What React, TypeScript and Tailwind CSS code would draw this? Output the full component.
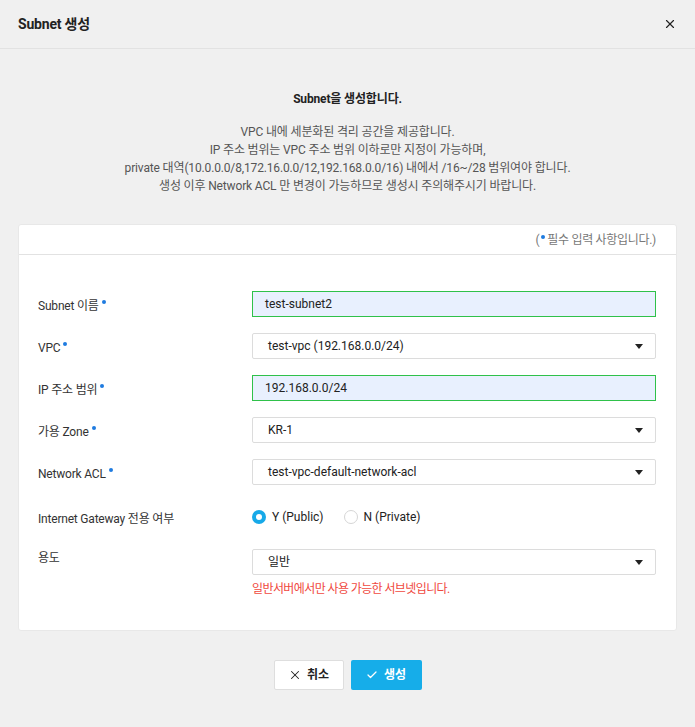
import { X, Check } from 'lucide-react'

const fontStack = { fontFamily: 'Roboto, "Noto Sans CJK KR", sans-serif' }

function Required() {
  return <span className="ml-[3px] inline-block h-[4px] w-[4px] -translate-y-[6px] rounded-full bg-[#1e7be0]" />
}

function Label({ text, required, top = 'mt-[4px]' }: { text: string; required?: boolean; top?: string }) {
  return (
    <div className={`${top} w-[214px] shrink-0 text-[12px] leading-[18px] tracking-[-0.2px] text-[#333]`}>
      {text}
      {required && <Required />}
    </div>
  )
}

function TextField({ value }: { value: string }) {
  return (
    <div className="flex h-[26px] w-[404px] items-center border border-[#2fc14a] bg-[#e8f0fe] px-[12px] text-[12px] text-[#222]">
      {value}
    </div>
  )
}

function SelectField({ value }: { value: string }) {
  return (
    <div className="flex h-[26px] w-[404px] items-center justify-between rounded-[2px] border border-[#dcdcdc] bg-white pl-[15px] pr-[12px] text-[12px] text-[#222]">
      <span>{value}</span>
      <span className="h-0 w-0 border-x-[4px] border-t-[5px] border-x-transparent border-t-[#222]" />
    </div>
  )
}

export default function App() {
  return (
    <div className="min-h-[727px] w-full bg-[#f0f0f0]" style={fontStack}>
      {/* header */}
      <div className="flex h-[49px] items-center justify-between border-b border-[#e2e2e2] pl-[18px] pr-[18px]">
        <h2 className="text-[14px] font-bold tracking-[-0.2px] text-[#222]">Subnet 생성</h2>
        <X className="h-[14px] w-[14px] text-[#222]" strokeWidth={2} />
      </div>

      {/* intro */}
      <div className="pt-[41px] text-center tracking-[-0.15px]">
        <div className="text-[12px] font-bold leading-[18px] text-[#222]">Subnet을 생성합니다.</div>
        <div className="mt-[15px] text-[12px] leading-[18px] text-[#555]">
          <p>VPC 내에 세분화된 격리 공간을 제공합니다.</p>
          <p>IP 주소 범위는 VPC 주소 범위 이하로만 지정이 가능하며,</p>
          <p>private 대역(10.0.0.0/8,172.16.0.0/12,192.168.0.0/16) 내에서 /16~/28 범위여야 합니다.</p>
          <p>생성 이후 Network ACL 만 변경이 가능하므로 생성시 주의해주시기 바랍니다.</p>
        </div>
      </div>

      {/* form card */}
      <div className="mx-[18px] mt-[29px] rounded-[3px] border border-[#e8e8e8] bg-white">
        <div className="flex h-[30px] items-center justify-end border-b border-[#e2e2e2] pr-[20px] text-[12px] tracking-[-0.3px] text-[#777]">
          (<span className="mx-[2px] inline-block h-[4px] w-[4px] -translate-y-[3px] rounded-full bg-[#1e7be0]" />필수 입력 사항입니다.)
        </div>

        <div className="flex flex-col gap-4 pb-[32px] pl-[19px] pt-[36px]">
          <div className="flex items-center">
            <Label text="Subnet 이름" required />
            <TextField value="test-subnet2" />
          </div>
          <div className="flex items-center">
            <Label text="VPC" required />
            <SelectField value="test-vpc (192.168.0.0/24)" />
          </div>
          <div className="flex items-center">
            <Label text="IP 주소 범위" required />
            <TextField value="192.168.0.0/24" />
          </div>
          <div className="flex items-center">
            <Label text="가용 Zone" required />
            <SelectField value="KR-1" />
          </div>
          <div className="flex items-center">
            <Label text="Network ACL" required />
            <SelectField value="test-vpc-default-network-acl" />
          </div>
          <div className="flex h-[32px] items-center">
            <Label text="Internet Gateway 전용 여부" />
            <div className="flex items-center text-[12px] text-[#222]">
              <span className="flex h-[14px] w-[14px] items-center justify-center rounded-full bg-[#17a9e8]">
                <span className="h-[6px] w-[6px] rounded-full bg-white" />
              </span>
              <span className="ml-[6px]">Y (Public)</span>
              <span className="ml-[20px] h-[14px] w-[14px] rounded-full border border-[#d6d6d6] bg-white" />
              <span className="ml-[6px]">N (Private)</span>
            </div>
          </div>
          <div className="flex items-start">
            <Label text="용도" top="mt-0" />
            <div>
              <SelectField value="일반" />
              <p className="mt-[5px] text-[12px] leading-[18px] tracking-[-0.6px] text-[#f0493e]">일반서버에서만 사용 가능한 서브넷입니다.</p>
            </div>
          </div>
        </div>
      </div>

      {/* actions */}
      <div className="mt-[29px] flex justify-center gap-[7px] pb-[37px]">
        <button className="flex h-[30px] w-[70px] items-center justify-center gap-[5px] rounded-[2px] border border-[#dedede] bg-white text-[12px] font-bold text-[#222]">
          <X className="h-[14px] w-[14px]" strokeWidth={1.75} />
          취소
        </button>
        <button className="flex h-[30px] w-[71px] items-center justify-center gap-[6px] rounded-[2px] bg-[#16ade9] text-[12px] font-bold text-white">
          <Check className="h-[12px] w-[12px]" strokeWidth={2.5} />
          생성
        </button>
      </div>
    </div>
  )
}
